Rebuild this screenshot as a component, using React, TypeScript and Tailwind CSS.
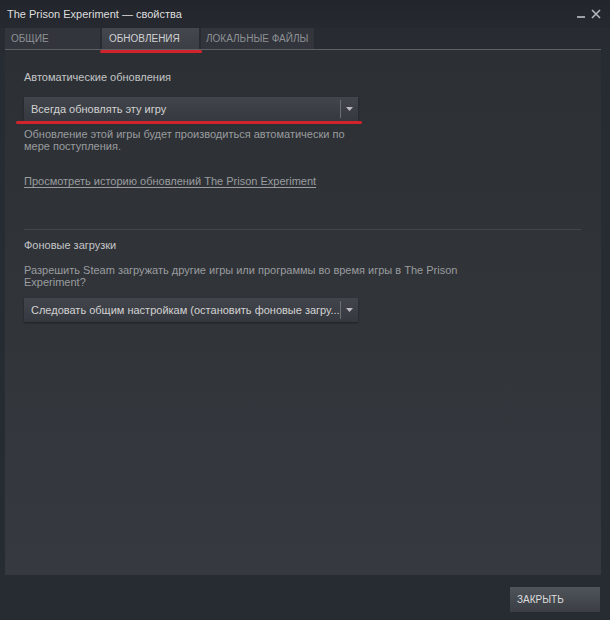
import React from "react";

function Dropdown({ text }: { text: string }) {
  return (
    <div className="flex h-[24px] w-[334px] items-center bg-gradient-to-b from-[#42454c] to-[#35383e] shadow-[0_1px_2px_rgba(0,0,0,0.4)]">
      <div className="flex-1 overflow-hidden whitespace-nowrap pl-[7px] text-[11px] leading-[14px] text-[#d2d2d2]">{text}</div>
      <div className="h-[18px] w-px bg-[#6b6f75]" />
      <div className="flex w-[17px] items-center justify-center">
        <svg width="7" height="4" viewBox="0 0 7 4">
          <polygon points="0,0 7,0 3.5,4" fill="#b9bbbe" />
        </svg>
      </div>
    </div>
  );
}

export default function App() {
  return (
    <div
      className="relative flex h-[620px] w-[610px] flex-col bg-[#262c31] text-[11px] leading-[12px]"
      style={{ fontFamily: '"Liberation Sans", Arial, sans-serif' }}
    >
      {/* Title bar */}
      <div className="flex h-[28px] items-center justify-between bg-gradient-to-b from-[#22252b] to-[#262a30] pl-[7px] pr-[9px]">
        <div className="text-[11px] text-[#dedede]">The Prison Experiment — свойства</div>
        <div className="flex items-center gap-[6px] text-[#a8abaf]">
          <div className="mt-[6px] h-[2px] w-[8px] bg-[#9da0a4]" />
          <svg width="10" height="10" viewBox="0 0 10 10">
            <path d="M1 1 L9 9 M9 1 L1 9" stroke="#b4b7bb" strokeWidth="1.6" />
          </svg>
        </div>
      </div>

      {/* Tabs */}
      <div className="flex h-[21px] gap-[2px] bg-[#282c32] pl-[5px]">
        <div className="flex w-[95px] items-center whitespace-nowrap bg-[#32353b] pl-[6px] text-[10px] text-[#8e9196]">ОБЩИЕ</div>
        <div className="relative flex w-[97px] items-center whitespace-nowrap bg-gradient-to-b from-[#44474d] to-[#3b3e44] pl-[7px] text-[10px] text-[#d0d1d3]">
          ОБНОВЛЕНИЯ
          <div className="absolute left-[-2px] top-[22px] h-[3px] w-[102px] rounded-full bg-[#d0232b]" />
        </div>
        <div className="flex w-[113px] items-center whitespace-nowrap bg-[#32353b] pl-[5px] text-[10px] text-[#8e9196]">ЛОКАЛЬНЫЕ ФАЙЛЫ</div>
      </div>

      {/* Panel */}
      <div className="ml-[5px] mr-[9px] flex flex-1 flex-col border-t border-[#5d6167] bg-gradient-to-b from-[#2c3034] to-[#36393f] pl-[19px] pt-[21px]">
        <div className="text-[#c4c5c7]">Автоматические обновления</div>
        <div className="relative mt-[14px]">
          <Dropdown text="Всегда обновлять эту игру" />
          <div className="absolute left-[-8px] top-[24px] h-[3px] w-[346px] rounded-full bg-[#d0232b]" />
        </div>
        <div className="mt-[7px] text-[#9a9c9f]">
          <div>Обновление этой игры будет производиться автоматически по</div>
          <div>мере поступления.</div>
        </div>
        <div className="mt-[23px] text-[#9a9c9f] underline underline-offset-[2px]">
          Просмотреть историю обновлений The Prison Experiment
        </div>
        <div className="mr-[20px] mt-[42px] h-px bg-[#43474d]" />
        <div className="mt-[9px] text-[#c4c5c7]">Фоновые загрузки</div>
        <div className="mt-[13px] text-[#9a9c9f]">
          <div>Разрешить Steam загружать другие игры или программы во время игры в The Prison</div>
          <div>Experiment?</div>
        </div>
        <div className="mt-[10px]">
          <Dropdown text="Следовать общим настройкам (остановить фоновые загру..." />
        </div>
      </div>

      {/* Footer */}
      <div className="flex h-[45px] items-start justify-end pr-[10px] pt-[12px]">
        <div className="flex h-[25px] w-[90px] items-center bg-gradient-to-b from-[#4f535a] to-[#3b3f45] pl-[7px] text-[10px] text-[#dcdcdc]">
          ЗАКРЫТЬ
        </div>
      </div>
    </div>
  );
}
